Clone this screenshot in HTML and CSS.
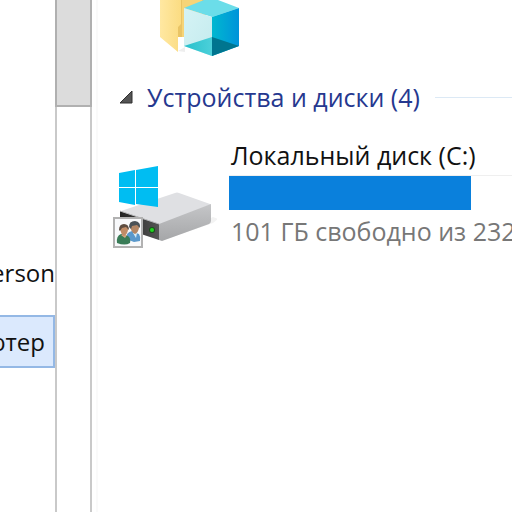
FILE: index.html
```html
<!DOCTYPE html>
<html lang="ru">
<head>
	<meta charset="UTF-8">
	<title>Компьютер</title>
	<link rel="stylesheet" href="styles.css">
</head>
<body>
	<nav class="tree">
		<ul>
			<li><a href="#">Person</a></li>
			<li class="active"><a href="#">Компьютер</a></li>
		</ul>
	</nav>
	<div class="scrollbar"><div class="thumb"></div></div>
	<main class="content">
		<div class="folder">
			<svg width="90" height="64" viewBox="0 0 90 64">
				<defs>
					<linearGradient id="paper" x1="0" y1="0" x2="1" y2="0">
						<stop offset="0" stop-color="#ffe8a2"/>
						<stop offset="1" stop-color="#fbdc82"/>
					</linearGradient>
					<linearGradient id="cubeRight" x1="0" y1="0" x2="1" y2="0">
						<stop offset="0" stop-color="#00b8d0"/>
						<stop offset="1" stop-color="#0093da"/>
					</linearGradient>
					<linearGradient id="cubeLeft" x1="0" y1="0" x2="1" y2="1">
						<stop offset="0" stop-color="#d5f3f5"/>
						<stop offset="1" stop-color="#c4ebee"/>
					</linearGradient>
					<linearGradient id="cubeFloor" x1="0" y1="0" x2="1" y2="0">
						<stop offset="0" stop-color="#27c0cb"/>
						<stop offset="1" stop-color="#4cd0da"/>
					</linearGradient>
				</defs>
				<path d="M28 51l7-4v5zM84 47l6-4-5 4z" fill="#eee"/>
				<path d="M28 0h28v37H28z" fill="#e9c465"/>
				<path d="M32 0h20v37H32z" fill="#f6d477"/>
				<path d="M10 0h21v24l-3 3v25L10 37z" fill="url(#paper)"/>
				<path d="M34 8L54 0h14l21 8-27 9z" fill="#6bdde9"/>
				<path d="M34 8l28 9v39L34 46z" fill="url(#cubeLeft)"/>
				<path d="M34 46l28-9v19z" fill="url(#cubeFloor)"/>
				<path d="M62 17l27-9v38l-27 10z" fill="url(#cubeRight)"/>
				<path d="M62 37l27 9-27 10z" fill="#00758f"/>
			</svg>
		</div>
		<section class="group">
			<h2>
				<button class="toggle" type="button" aria-label="Свернуть">
					<svg width="14" height="14" viewBox="0 0 14 14"><path d="M13 1v12H1z" fill="#555" stroke="#303030"/></svg>
				</button>
				<span>Устройства и диски (4)</span>
			</h2>
			<div class="drive">
				<div class="drive-icon">
					<svg width="104" height="88" viewBox="0 0 104 88">
						<defs>
							<linearGradient id="side" x1="0" y1="0" x2="0" y2="1">
								<stop offset="0" stop-color="#c5c6c8"/>
								<stop offset="1" stop-color="#a5a6a8"/>
							</linearGradient>
							<linearGradient id="front" x1="0" y1="0" x2="1" y2="0">
								<stop offset="0" stop-color="#222"/>
								<stop offset="1" stop-color="#555"/>
							</linearGradient>
						</defs>
						<path d="M48 80l52-18 5-4-5-2z" fill="#f3f3f3"/>
						<path d="M8 50l54-18q2-1 4 0l31 11q2 1 0 2L46 65z" fill="#dfe0e3"/>
						<path d="M46 63l52-20v17q0 2-2 3L49 80l-3-1z" fill="url(#side)"/>
						<path d="M7 50l39 13v16L7 66z" fill="url(#front)"/>
						<path d="M7 50l39 13" stroke="#b5b6b8"/>
						<path d="M6 12l16-3v17H6zM23 9l22-4v21H23zM6 27h16v17L6 41zM23 27h22v19l-22-3z" fill="#00bdf2"/>
						<circle cx="39" cy="69" r="3" fill="#19501b"/>
						<circle cx="39" cy="69" r="2" fill="#22d520"/>
						<path d="M1 57h28v29H1z" fill="#f8f9fb" stroke="#b2b2b2" stroke-width="2"/>
						<path d="M13 78q0-7 6-8l4 2 3 1q2 3 1 7l-6 1z" fill="#5a98cb"/>
						<path d="M20 72l3 5 1-5z" fill="#d8ebf5"/>
						<path d="M17 64q0-4 5-3 5 0 4 6-1 5-4 6-4-1-5-9z" fill="#b48765"/>
						<path d="M16 66q0-6 6-6 6 1 5 7l-3-3-5 1-1 3z" fill="#4b5257"/>
						<path d="M4 82q-1-7 4-9l4 1 3 1q3 2 2 7-5 3-13 0z" fill="#397c57"/>
						<path d="M8 74l4 3 2-3z" fill="#d6a782"/>
						<path d="M7 67q1-4 5-3 4 1 3 5-1 5-4 6-3-1-4-8z" fill="#c08c67"/>
						<path d="M6 69q0-6 5-6t5 6l-3-3-4 1-2 3z" fill="#5d4c40"/>
					</svg>
				</div>
				<div class="drive-info">
					<a class="name" href="#">Локальный диск (C:)</a>
					<div class="bar"><div class="used"></div></div>
					<p class="free">101 ГБ свободно из 232 ГБ</p>
				</div>
			</div>
		</section>
	</main>
</body>
</html>
```
FILE: styles.css
```css
*{box-sizing:border-box;}
body{display:flex;height:100vh;margin:0;overflow:hidden;background-color:#fff;color:#111;font:25px/32px "Open Sans","Noto Sans",sans-serif;}
a{color:inherit;text-decoration:none;}
ul{list-style:none;margin:0;padding:0;}

/* дерево папок слева */
.tree{flex:none;width:55px;padding-top:246px;overflow:hidden;font-size:24px;}
.tree li{display:flex;justify-content:flex-end;align-items:center;height:53px;}
.tree li + li{margin-top:16px;}
.tree .active{padding-right:8px;border:2px solid #94b8e5;border-left:none;background-color:#dbe9fd;}

/* полоса прокрутки */
.scrollbar{flex:none;width:37px;border:solid #c9c9c9;border-width:0 2px;}
.thumb{height:107px;margin:0 -2px;border:2px solid #b0b0b0;border-top:none;background-color:#dcdcdc;}

.content{flex:1;min-width:0;margin-left:4px;border-left:2px solid #fafafa;overflow:hidden;}
.folder{height:64px;padding-left:52px;}
.folder svg,.drive-icon svg,.toggle svg{display:block;}

.group h2{display:flex;align-items:center;margin:0;padding:17px 0 0 21px;color:#26388f;font-size:25px;font-weight:normal;white-space:nowrap;}
.group h2::after{content:"";flex:1;height:1px;margin-left:15px;background-color:#dce9f5;}
.toggle{margin-right:14px;padding:0;border:none;background:none;}

.drive{display:flex;padding:26px 0 0 15px;}
.drive-icon{flex:none;width:104px;margin:22px 12px 0 0;}
.drive-info{flex:1;min-width:0;white-space:nowrap;}
.name{display:block;height:36px;padding-left:2px;}
.bar{height:35px;border-top:1px solid #efefef;}
.used{width:242px;height:34px;background-color:#0a80dc;}
.free{margin:0;padding:5px 0 0 2px;color:#777;}
```
